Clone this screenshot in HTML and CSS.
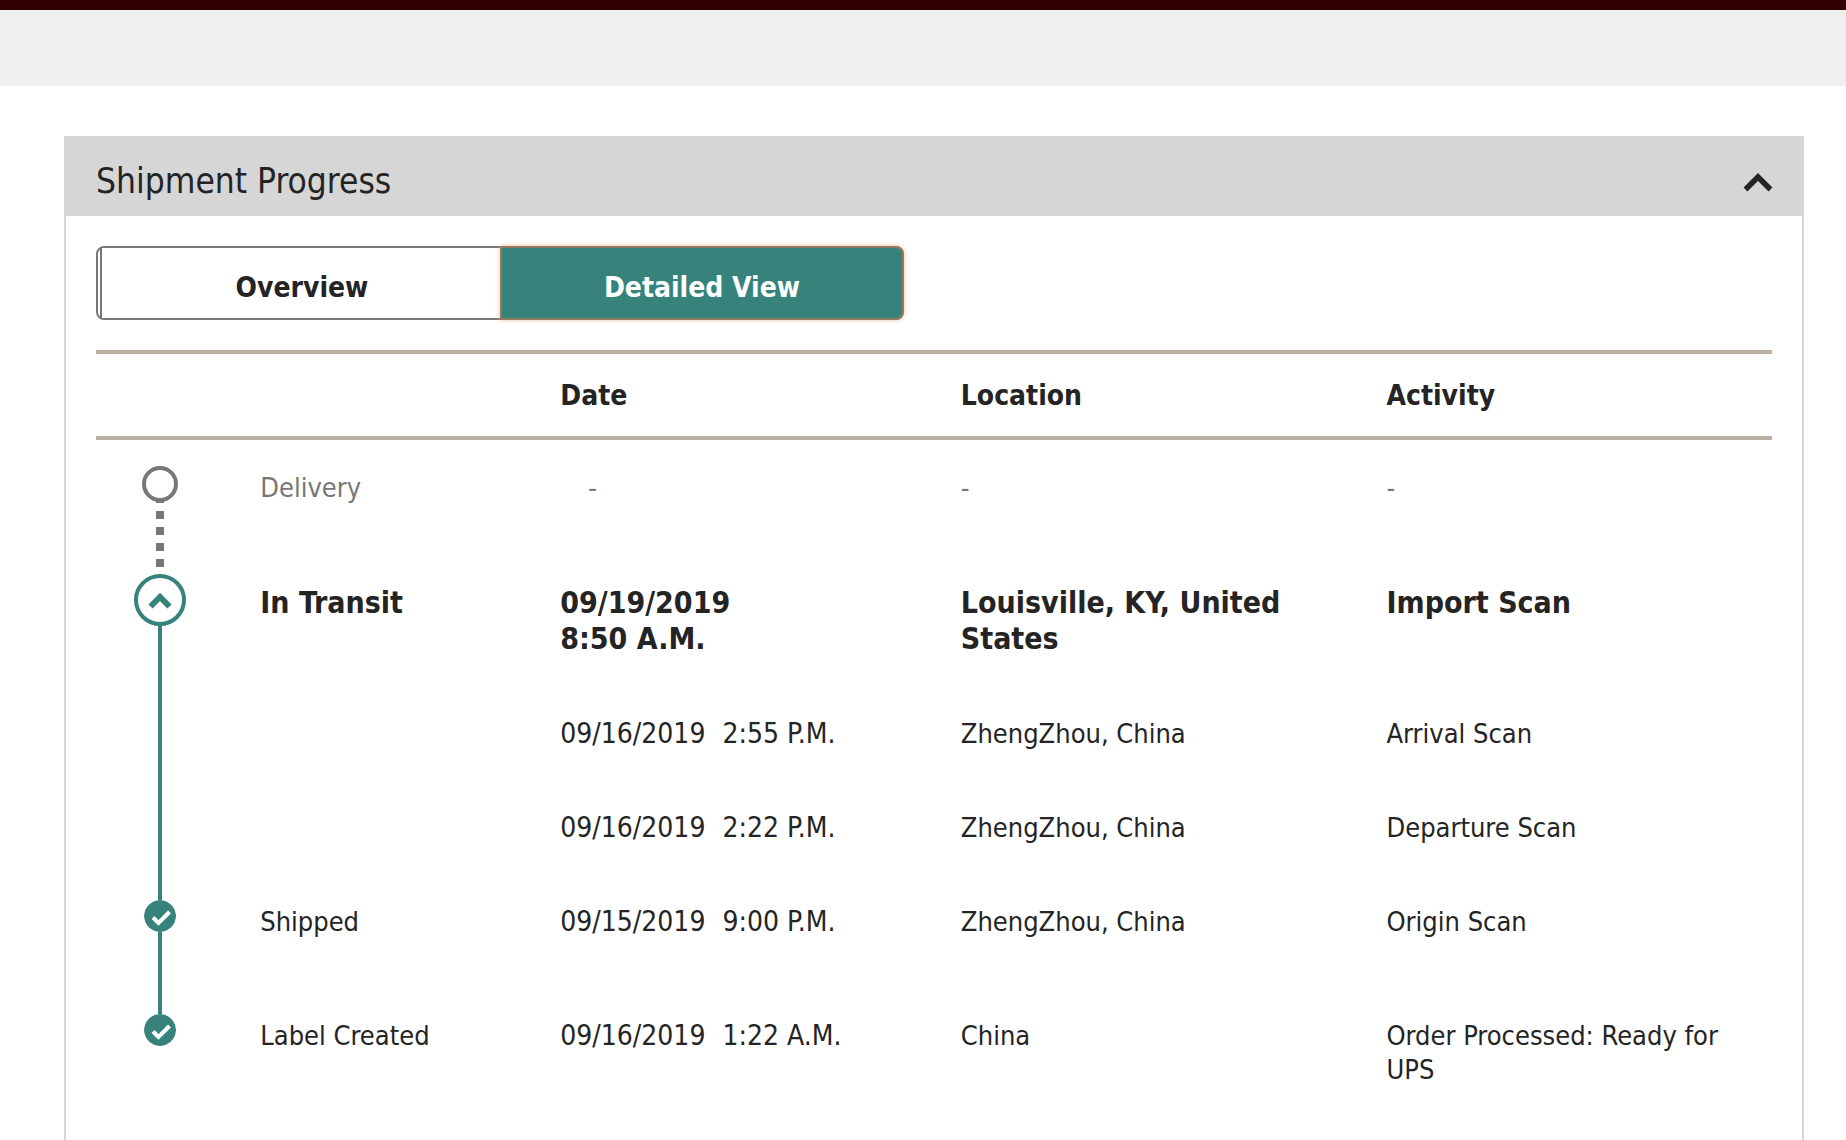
FILE: index.html
```html
<!DOCTYPE html>
<html lang="en">
<head>
  <meta charset="UTF-8">
  <title>Shipment Progress</title>
  <link rel="stylesheet" href="styles.css">
</head>
<body>

  <div class="top-bar"></div>
  <div class="sub-bar"></div>

  <section class="panel">
    <div class="panel-header">
      <h2>Shipment Progress</h2>
      <button class="collapse-btn" aria-label="Collapse shipment progress">
        <svg width="30" height="20" viewBox="0 0 30 20"><path d="M2.500 16.500 15 4 27.500 16.500" fill="none" stroke="#242424" stroke-width="5.500"/></svg>
      </button>
    </div>

    <div class="panel-body">
      <div class="tabs">
        <button class="tab">Overview</button>
        <button class="tab active">Detailed View</button>
      </div>

      <table class="progress">
        <thead>
          <tr>
            <th class="col-icon"></th>
            <th class="col-step"></th>
            <th class="col-date">Date</th>
            <th class="col-location">Location</th>
            <th class="col-activity">Activity</th>
          </tr>
        </thead>
        <tbody>
          <tr class="pending last-of-step">
            <td class="track track-dotted"><span class="dot"></span></td>
            <td>Delivery</td>
            <td class="no-date">-</td>
            <td>-</td>
            <td>-</td>
          </tr>
          <tr class="current">
            <td class="track track-start">
              <button class="toggle" aria-label="Collapse In Transit">
                <svg width="26" height="18" viewBox="0 0 26 18"><path d="M3.500 14.500 13 5 22.500 14.500" fill="none" stroke="#37837c" stroke-width="6"/></svg>
              </button>
            </td>
            <td>In Transit</td>
            <td>09/19/2019<br>8:50 A.M.</td>
            <td>Louisville, KY, United States</td>
            <td>Import Scan</td>
          </tr>
          <tr>
            <td class="track"></td>
            <td></td>
            <td class="date">09/16/2019 <span class="time">2:55 P.M.</span></td>
            <td>ZhengZhou, China</td>
            <td>Arrival Scan</td>
          </tr>
          <tr>
            <td class="track"></td>
            <td></td>
            <td class="date">09/16/2019 <span class="time">2:22 P.M.</span></td>
            <td>ZhengZhou, China</td>
            <td>Departure Scan</td>
          </tr>
          <tr class="last-of-step">
            <td class="track">
              <svg class="check" width="32" height="32" viewBox="0 0 32 32"><circle cx="16" cy="16" r="16" fill="#37837c"/><path d="M9 17.500 14.500 23 25.500 12" fill="none" stroke="#fff" stroke-width="4"/></svg>
            </td>
            <td>Shipped</td>
            <td class="date">09/15/2019 <span class="time">9:00 P.M.</span></td>
            <td>ZhengZhou, China</td>
            <td>Origin Scan</td>
          </tr>
          <tr>
            <td class="track track-end">
              <svg class="check" width="32" height="32" viewBox="0 0 32 32"><circle cx="16" cy="16" r="16" fill="#37837c"/><path d="M9 17.500 14.500 23 25.500 12" fill="none" stroke="#fff" stroke-width="4"/></svg>
            </td>
            <td>Label Created</td>
            <td class="date">09/16/2019 <span class="time">1:22 A.M.</span></td>
            <td>China</td>
            <td>Order Processed: Ready for UPS</td>
          </tr>
        </tbody>
      </table>
    </div>
  </section>

</body>
</html>
```

FILE: styles.css
```css
* {
  box-sizing: border-box;
}

body {
  display: flex;
  flex-direction: column;
  min-height: 100vh;
  margin: 0;
  background-color: #fff;
  color: #242424;
  font-family: Tahoma, "DejaVu Sans Condensed", "DejaVu Sans", sans-serif;
  font-size: 27px;
  line-height: 34px;
}

button {
  font: inherit;
  color: inherit;
  cursor: pointer;
}

svg {
  display: block;
}

.top-bar {
  height: 10px;
  background-color: #330000;
}

.sub-bar {
  height: 76px;
  background-color: #f0f0ee;
}

.panel {
  flex: 1;
  margin: 50px 42px 0 64px;
  border: 2px solid #d6d6d6;
  border-width: 0 2px;
}

.panel-header {
  display: flex;
  align-items: center;
  justify-content: space-between;
  height: 80px;
  padding: 10px 29px 0 30px;
  background-color: #d6d6d6;
}

.panel-header h2 {
  margin: 0;
  font-size: 35px;
  font-weight: normal;
  line-height: 44px;
}

.collapse-btn {
  padding: 4px 0 0;
  border: none;
  background: none;
}

.panel-body {
  padding: 30px 30px 0;
}

/* view switch */
.tabs {
  display: flex;
  width: 808px;
  max-width: 100%;
  height: 74px;
  padding-left: 2px;
  border: 2px solid #777;
  border-radius: 8px;
}

.tab {
  flex: 1;
  padding: 9px 0 0;
  border: none;
  border-left: 2px solid #777;
  background-color: #fff;
  font-size: 28px;
  font-weight: bold;
}

.tab.active {
  margin: -2px -2px -2px -2px;
  border: 2px solid #957a62;
  border-radius: 0 8px 8px 0;
  background-color: #37837c;
  color: #fff;
  box-shadow: 0 0 5px #e9bd9a;
}

/* tracking table */
.progress {
  width: 100%;
  margin-top: 30px;
  border-collapse: separate;
  border-spacing: 0;
  table-layout: fixed;
}

.progress th {
  height: 90px;
  padding: 2px 0 0;
  border-top: 4px solid #b8afa2;
  border-bottom: 4px solid #b8afa2;
  font-size: 28px;
  text-align: left;
}

.progress td {
  padding: 30px 0;
  vertical-align: top;
}

.progress td:last-child {
  padding-right: 20px;
}

.progress td:nth-child(4) {
  padding-right: 60px;
}

.progress .last-of-step td {
  padding-bottom: 50px;
}

.col-icon {
  width: 9.8%;
}

.col-step {
  width: 17.9%;
}

.col-date {
  width: 23.9%;
}

.col-location {
  width: 25.4%;
}

.progress .pending td {
  padding-top: 31px;
  color: #777;
}

.progress .no-date {
  padding-left: 28px;
}

.current {
  font-size: 30px;
  font-weight: bold;
  line-height: 36px;
}

.date {
  font-size: 28px;
}

.time {
  margin-left: 9px;
}

/* vertical line that joins the step icons */
.progress .track {
  position: relative;
  padding: 25px 0 0;
}

.track::before {
  content: "";
  position: absolute;
  top: 0;
  bottom: 0;
  left: 62px;
  width: 4px;
  background-color: #37837c;
}

.track-start::before {
  top: 44px;
}

.track-end::before {
  bottom: auto;
  height: 40px;
}

.track-dotted::before {
  top: 55px;
  bottom: -20px;
  left: 60px;
  width: 8px;
  background: repeating-linear-gradient(#777 0 8px, transparent 8px 16px);
}

.dot,
.toggle,
.check {
  position: relative;
  display: block;
  background-color: #fff;
  border-radius: 50%;
}

.dot {
  width: 36px;
  height: 36px;
  margin-left: 46px;
  border: 4px solid #777;
}

.toggle {
  display: flex;
  align-items: center;
  justify-content: center;
  width: 52px;
  height: 52px;
  margin-left: 38px;
  padding: 2px 0 0;
  border: 4px solid #37837c;
}

.progress .pending .track-dotted {
  padding-top: 26px;
}

.progress .track-start {
  padding-top: 19px;
}

.check {
  margin-left: 48px;
}
```
